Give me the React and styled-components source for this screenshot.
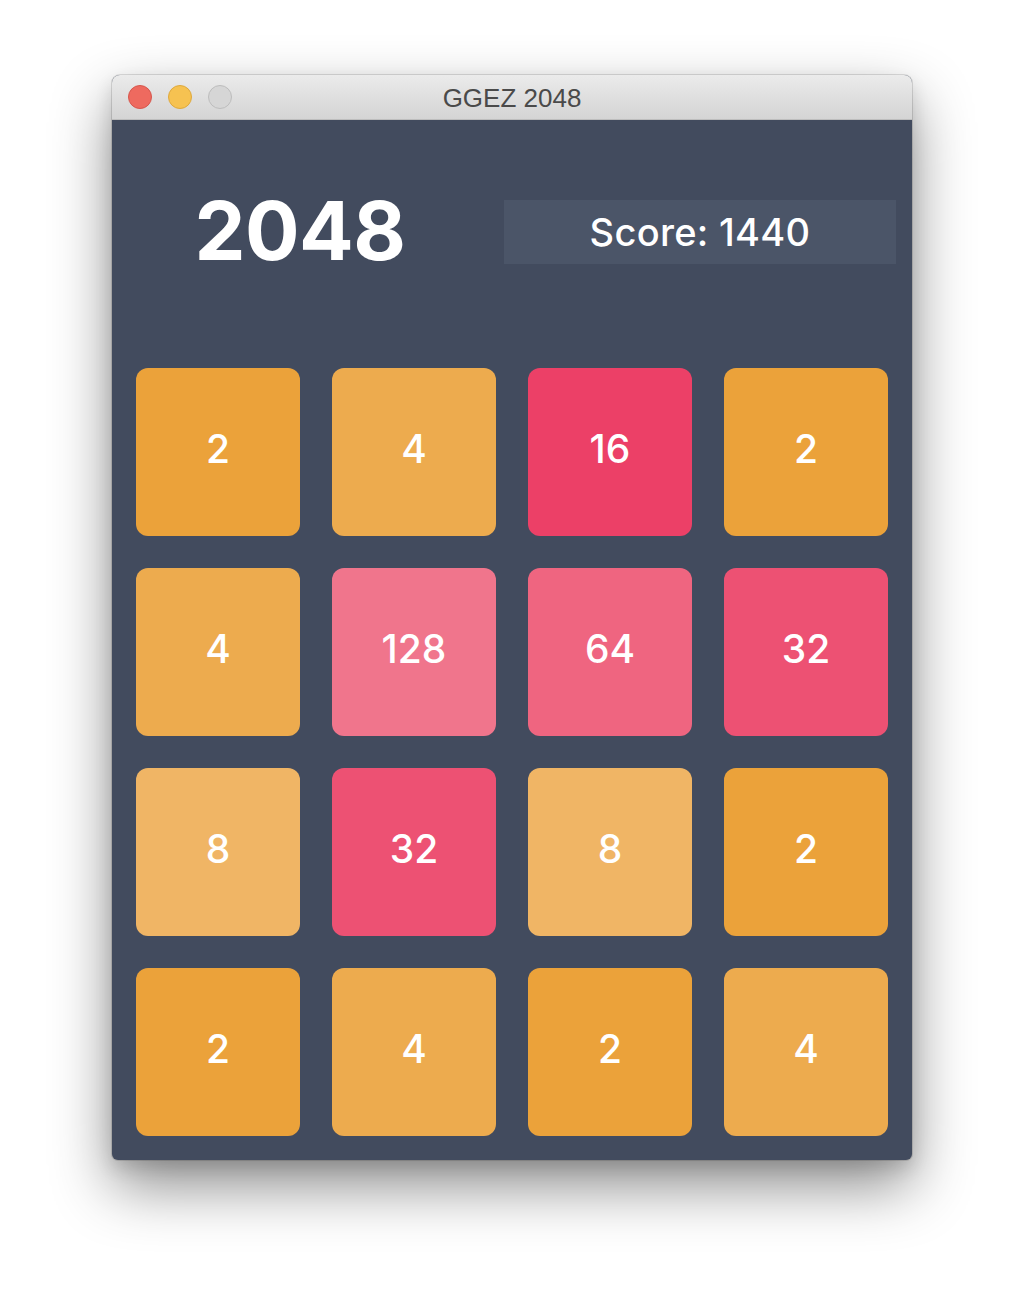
import React from "react";
import styled, { createGlobalStyle } from "styled-components";

const Global = createGlobalStyle`
  html, body { margin: 0; padding: 0; background: #ffffff; }
  body { font-family: Inter, "Open Sans", "Liberation Sans", sans-serif; }
`;

const Page = styled.div`
  width: 1024px;
  height: 1308px;
  padding-top: 75px;
  box-sizing: border-box;
  display: flex;
  justify-content: center;
  align-items: flex-start;
`;

const Window = styled.div`
  width: 800px;
  border-radius: 8px 8px 6px 6px;
  overflow: hidden;
  box-shadow: 0 0 0 1px rgba(0, 0, 0, 0.12), 0 26px 60px rgba(0, 0, 0, 0.45),
    0 8px 18px rgba(0, 0, 0, 0.12);
  background: #424b5e;
`;

const TitleBar = styled.div`
  height: 44px;
  border-bottom: 1px solid #bdbdbd;
  background: linear-gradient(#ebebeb, #d4d4d4);
  position: relative;
  display: flex;
  align-items: center;
  justify-content: center;
`;

const Lights = styled.div`
  position: absolute;
  left: 16px;
  top: 10px;
  display: flex;
  gap: 16px;
`;

const Light = styled.span`
  width: 24px;
  height: 24px;
  border-radius: 50%;
  box-sizing: border-box;
  background: ${(p) => p.$bg};
  border: 1px solid ${(p) => p.$bd};
`;

const WindowTitle = styled.span`
  font-family: "Liberation Sans", "Open Sans", sans-serif;
  font-size: 26px;
  color: #4a4a4a;
  margin-top: 2px;
`;

const Header = styled.div`
  padding: 80px 16px 0;
  display: grid;
  grid-template-columns: 344px 392px;
  column-gap: 32px;
  align-items: center;
`;

const BigTitle = styled.div`
  font-family: Inter, "Open Sans", sans-serif;
  font-weight: 700;
  font-size: 81px;
  letter-spacing: -0.5px;
  line-height: 62px;
  height: 64px;
  color: #ffffff;
  text-align: center;
`;

const ScoreBox = styled.div`
  height: 64px;
  background: #4b5568;
  color: #ffffff;
  font-family: Inter, "Open Sans", sans-serif;
  font-weight: 500;
  font-size: 38px;
  letter-spacing: 0.3px;
  display: flex;
  align-items: center;
  justify-content: center;
`;

const Board = styled.div`
  padding: 104px 24px 24px;
  display: grid;
  grid-template-columns: repeat(4, 164px);
  grid-auto-rows: 168px;
  gap: 32px;
`;

const Tile = styled.div`
  border-radius: 12px;
  background: ${(p) => p.$bg};
  color: #ffffff;
  font-family: Inter, "Open Sans", sans-serif;
  font-weight: 500;
  font-size: 39px;
  display: flex;
  align-items: center;
  justify-content: center;
  padding-bottom: 8px;
  box-sizing: border-box;
`;

const COLORS = {
  2: "#eba23a",
  4: "#edab4e",
  8: "#f0b565",
  16: "#ec4067",
  32: "#ed5173",
  64: "#ef6580",
  128: "#f0758c",
};

const CELLS = [2, 4, 16, 2, 4, 128, 64, 32, 8, 32, 8, 2, 2, 4, 2, 4];

export default function App() {
  return (
    <>
      <Global />
      <Page>
        <Window>
          <TitleBar>
            <Lights>
              <Light $bg="#ee6a5f" $bd="#d6574d" />
              <Light $bg="#f6c251" $bd="#dea93d" />
              <Light $bg="#d6d6d6" $bd="#bdbdbd" />
            </Lights>
            <WindowTitle>GGEZ 2048</WindowTitle>
          </TitleBar>
          <Header>
            <BigTitle>2048</BigTitle>
            <ScoreBox>Score: 1440</ScoreBox>
          </Header>
          <Board>
            {CELLS.map((v, i) => (
              <Tile key={i} $bg={COLORS[v]}>
                {v}
              </Tile>
            ))}
          </Board>
        </Window>
      </Page>
    </>
  );
}
